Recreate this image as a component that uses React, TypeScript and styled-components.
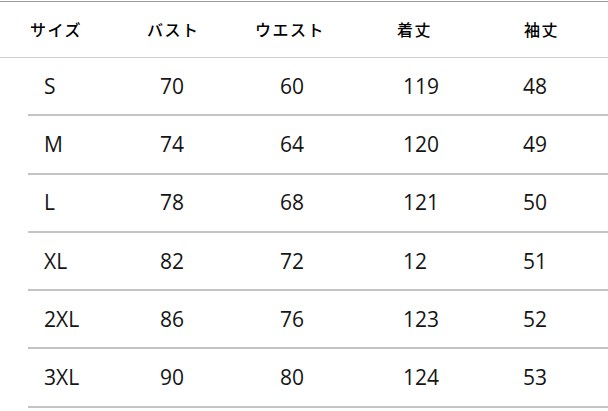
import styled, { createGlobalStyle } from 'styled-components';

const GlobalStyle = createGlobalStyle`
	html, body {
		margin: 0;
		padding: 0;
		background: #fff;
	}
	body {
		font-family: 'Open Sans', 'Noto Sans CJK JP', sans-serif;
		color: #1c1c1c;
	}
`;

const headers = ['サイズ', 'バスト', 'ウエスト', '着丈', '袖丈'];

const rows = [
	['S', '70', '60', '119', '48'],
	['M', '74', '64', '120', '49'],
	['L', '78', '68', '121', '50'],
	['XL', '82', '72', '12', '51'],
	['2XL', '86', '76', '123', '52'],
	['3XL', '90', '80', '124', '53'],
];

export default function App() {
	return (
		<>
			<GlobalStyle />
			<Table>
				<HeaderRow>
					{headers.map((h) => (
						<HeaderCell key={h}>{h}</HeaderCell>
					))}
				</HeaderRow>
				{rows.map((row) => (
					<DataRow key={row[0]}>
						{row.map((value, i) => (
							<Cell key={i}>{value}</Cell>
						))}
					</DataRow>
				))}
			</Table>
		</>
	);
}

const Table = styled.div`
	width: 608px;
	height: 411px;
	border-top: 1px solid #9a9a9a;
	margin-top: 1px;
	display: flex;
	flex-direction: column;
`;

const HeaderRow = styled.div`
	display: grid;
	grid-template-columns: 117px 108px 142px 127px 1fr;
	align-items: center;
	height: 55px;
	padding-left: 30px;
	border-bottom: 1px solid #cfcfcf;
`;

const HeaderCell = styled.div`
	font-family: 'Noto Sans CJK JP', sans-serif;
	font-size: 16px;
	font-weight: 500;
	color: #000;
	letter-spacing: 1.5px;
	padding-bottom: 2px;
`;

const DataRow = styled.div`
	display: grid;
	grid-template-columns: 116px 120px 123px 120px 1fr;
	align-items: center;
	height: 56.3px;
	margin-left: 28px;
	padding-left: 16px;
	border-bottom: 2px solid #c4c4c4;
`;

const Cell = styled.div`
	font-family: 'Open Sans', sans-serif;
	font-size: 21px;
	color: #151515;
	line-height: 1;
`;
